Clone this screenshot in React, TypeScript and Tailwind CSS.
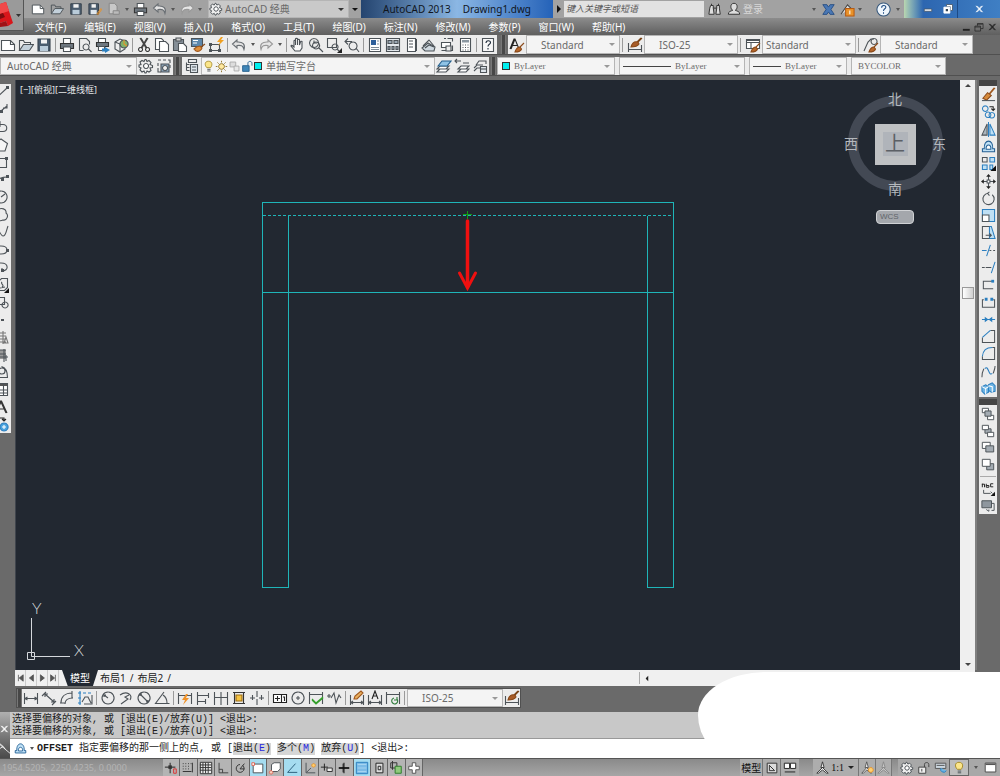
import type { ReactNode } from "react";
import clsx from "clsx";

// ── Icon data: [path, stroke, fill] on a 16 x 16 grid
type Layer = [d: string, stroke?: string, fill?: string];

const K = "#4d5358";
const B = "#2b7fc0";
const L = "#bfe0f5";
const O = "#e8922a";
const N = "none";

const brush: Layer[] = [
  ["M15 6l-4 4", "#8a4a1a"],
  ["M6 15c1-3 2-5 5-5l1.500 2c-1 3-3.500 3-6.500 3z", "#8a4a1a", "#b8682c"],
];
const dims: Layer[] = [["M1.500 5v10M14.500 5v10M2 12.500h12M4 11l-2 1.500 2 1.500M12 11l2 1.500-2 1.500"]];

const icons: Record<string, Layer[]> = {
  new: [["M1.500 3.500h9l4 4v6h-13z", K, "#fff"], ["M10.500 3.500v4h4"]],
  open: [["M1.500 13.500v-10h4l1 2h6v2"], ["M1.500 13.500l4-6h10l-4 6z", K, "#c3d0da"]],
  save: [["M2 2h12v12H2z", "#37424d", "#4a5c6e"], ["M5 2.500h6v4H5z", N, "#f2f2f2"], ["M4 9h8v5H4z", N, "#b9cbd9"]],
  saveAs: [["M1 2h11v12H1z", "#37424d", "#4a5c6e"], ["M4 2.500h5v4H4z", N, "#f2f2f2"], ["M3 9h7v5H3z", N, "#dfe6ec"], ["M15 7l-5 7M16 8l-5 7", O]],
  plotFile: [["M2.500 1.500h6l3 3v9h-9z", "#858585", "#c8c8c8"], ["M7 10h7v4H7z", "#858585", "#bbb"]],
  print: [["M4.500 6V1.500h7V6", K, "#fff"], ["M1.500 6.500h13v5h-13z", "#333", "#6f7880"], ["M4.500 10h7v4.500h-7z", K, "#fff"]],
  preview: [["M2.500 13.500v-12h7l3 3v3M2.500 13.500h4", K, N], ["M9 7a3 3 0 1 0 .1 0M11.500 12l3 3"]],
  publish: [["M3.500 5V1.500h7V5", K, "#fff"], ["M1.500 5.500h12v4h-12z", "#333", "#6f7880"], ["M3.500 9.500h6v4h-6z", K, "#fff"], ["M10 10v1.500H7v3h3V16l5-3z", N, B]],
  dwf: [["M2 5l5-3 5 2v8l-5 3-5-3z", K, "#eee"], ["M2 5l5 2v7M7 7l5-3"], ["M11 3a4 4 0 1 0 .1 0", K, "#7fb069"], ["M11 3v4l3 2", O]],
  cut: [["M4 1l6 10M12 1L6 11M5 1l6 10M11 1L5 11", "#444"], ["M4.500 10.500a2 2 0 1 0 .1 0M11.500 10.500a2 2 0 1 0 .1 0", "#333"]],
  copy: [["M1.500 1.500h6l2 2v9h-8z", K, "#fff"], ["M5.500 4.500h6l3 3v7h-9z", K, "#fff"]],
  paste: [["M1.500 2.500h10v11h-10z", K, "#858f98"], ["M4 1h5v3H4z", K, "#ccc"], ["M6.500 6.500h5l3 3v5h-8z", K, "#fff"]],
  match: [["M1.500 1.500h11v8h-11z", K, "#5e88ac"], ["M3 3.500h5M3 6h4", "#fff"], ["M15 7l-4 3", "#8a4a1a"], ["M4 12c2-2 4-3 6-3l2 2c-1 3-4 4-6 3z", "#a0581e", "#e0903c"]],
  blockEdit: [["M2.500 7.500h9v6h-9z"], ["M1 6h3v3H1zM1 12h3v3H1zM10 12h3v3h-3z", N, K], ["M13 0l-4 5h3l-2 4 6-6h-3l2-3z", N, "#f0a020"]],
  undo: [["M6 3L1.500 7 6 11V8.500c4-.5 6 0 7 4 1.500-5-1-8-7-7.500z", "#6a6f74", "#e3e3e3"]],
  redo: [["M10 3l4.500 4-4.500 4V8.500c-4-.5-6 0-7 4C1.500 7.500 4 4.500 10 5z", "#999", "#e6e6e6"]],
  pan: [["M5 14l-4-5c0-1 1-1 3 1V4c0-1 1.500-1 1.500 0v4V2c0-1 2-1 2 0v6-5c0-1 2-1 2 0v5l1-3c0-1 2-1 1.500 0L12 11l-2 3z", K, "#f7f7f7"]],
  zoomRt: [["M6 1.500a4.500 4.500 0 1 0 .1 0M6 3.500V6h3"], ["M8 5a3.500 3.500 0 1 0 .1 0M11 11l4 4", K]],
  zoomWin: [["M1.500 1.500h9v9h-9z"], ["M9 7a3 3 0 1 0 .1 0M11 12l2 2"], ["M16 11v5h-5z", N, "#222"]],
  zoomPrev: [["M9 5a4 4 0 1 0 .1 0M12 11l3 4"], ["M1 4.500h7M4 1.500l-3 3 3 3"]],
  properties: [["M2.500 1.500h11v13h-11z", K, "#fff"], ["M4 3h5v5H4z", N, "#2d5f9a"], ["M10 4h2M10 7h2M4 10.500h8M4 12.500h8", "#7c8a96"]],
  center: [["M1.500 1.500h13v13h-13z", K, "#e3e8ec"], ["M3 3.500h4v3H3zM9 3.500h4v3H9zM3 9.500h2v3H3zM7 9.500h2v3H7zM11 9.500h2v3h-2z", K, "#9aa8b4"]],
  palettes: [["M4.500 1.500h8v13h-8z", K, "#fff"], ["M12 2h2v12h-2z", N, K], ["M6 4h4M6 7h4M6 10h4"]],
  sheetSet: [["M1 11l6-5 7 4-1 4H4z", K, "#cfd8df"], ["M2 9l6-6 5 6M4 11l4-3 5 2"]],
  markup: [["M2.500 5.500h9v5h-9z", K, "#fff"], ["M8.500 1.500h5v3M2.500 13.500h11v-5M5 1.500h2"], ["M7 9h5v5H7z", K, "#eee"]],
  calc: [["M3.500 1.500h10v13h-10z", K, "#fff"], ["M5 3h7v2.500H5z", N, "#8b97a1"], ["M5.500 8h1M8 8h1M10.500 8h1M5.500 10.500h1M8 10.500h1M10.500 10.500h1M5.500 13h1M8 13h1M10.500 13h1"]],
  help: [["M2.500 1.500h11v13h-11z", K, "#f7f7f7"], ["M6 6c0-3 4.500-3 4.500-.5C10.500 7.500 8 7 8 9.500M8 11v1.500", "#1d2a38"]],
  textStyle: [["M1 12L5 2h1L10 12M3 8.500h5M2 12L6 2", "#222"], ...brush],
  dimStyle: [["M1.500 6v9M14.500 8v7M2 12.500h12"], ["M15 1l-4 4M14 1l-4 4", "#7a4518"], ["M4 10c1-4 3-6 7-5l1 2c-2 3-5 3-8 3z", "#8a4a1a", "#a85c28"]],
  tableStyle: [["M1.500 2.500h13v9h-13z", K, "#fff"], ["M1.500 5.500h13M6 5v6M1 3.500h13"], ...brush],
  leaderStyle: [["M1 14l4-9 3-3h3", K], ["M11 1.500a3 3 0 1 0 .1 0", K], ...brush],
  gear: [["M8 1.500l1 2 2-1 2 2-1 2 2.500 1v2l-2.500.5 1 2.500-2 1.500-2-1-1 2H7l-1-2-2 1-2-2 1-2-2-1v-2l2-.5-1-2.500 2-1.500 2 1 1-2z", K, "#eee"], ["M8 5.500a2.500 2.500 0 1 0 .1 0", K, "#fff"]],
  workspace: [["M2 2h3M7 2h3M12 2h2v3M14 7v3M2 5v3M2 10v4h3"], ["M5 6h8v8H5z", K, "#8aa3b8"], ["M9 7.500a2.500 2.500 0 1 0 .1 0", K, "#eee"]],
  layers: [["M4.500 1.500h8v3h-8zM2.500 4.500v8M2.500 6.500h3M2.500 9.500h3M2.500 12.500h3"], ["M6.500 6.500h7v8h-7z", K, "#dfe6ec"], ["M8 9h4M8 12h4"]],
  bulb: [["M8 1.500c5 0 5 5 2.500 8H6c-3-3-3-8 2-8z", "#a58a2a", "#fbe58a"], ["M6.500 11.500h4M6.500 13.500h4"]],
  sun: [["M8 4.500a3.500 3.500 0 1 0 .1 0", "#8a6d20", "#ffe9a0"], ["M8 1v2M8 13v2M1 8h2M13 8h2M3 3l1.500 1.500M11.500 11.500L13 13M3 13l1.500-1.500M11.500 4.500L13 3", "#8a6d20"]],
  vpFreeze: [["M2.500 2.500h7v6h-7z", "#aaa", "#ddd"], ["M7.500 7.500h6v6h-6z", "#aaa", "#e8e8e8"]],
  unlock: [["M2 7h8v7H2z", "#245f8c", "#3f86b8"], ["M8.500 7V4c0-3 5-3 5 0v3", "#245f8c"]],
  layerCur: [["M1 14l3-3h9l-3 3zM1 11l3-3h9l-3 3z", K, "#fff"], ["M2 8l4-5h9l-4 5z", "#245f8c", "#8fc3e6"]],
  layerPrev: [["M4 14l3-3h8l-3 3zM4 11l3-3h8l-3 3z", K, "#fff"], ["M1 3h6M3 1L1 3l2 2M9 5h6"]],
  layerStates: [["M2 13l3-3h6M2 10l3-3h6M4 7l3-4h7v3", K, N], ["M8.500 8.500h6v6h-6z", K, "#dfe6ec"], ["M8 11h6"]],
  line: [["M2 14L14 3"], ["M13 1h3v3h-3z", N, K]],
  xline: [["M2 14L14 4M14 2v4h-4"], ["M7 8h3v3H7z", N, K]],
  pline: [["M4 4l3-2v4zM6 4.500h4c5 0 5 7 0 7H6"]],
  polygon: [["M8 2l6.500 4.500-2.500 7.500H4L1.500 6.500z", K, "#f5f5f5"]],
  rect: [["M1.500 3.500h12v9h-12z"], ["M12 2h3v3h-3z", N, K]],
  arc: [["M2 14c1-6 5-9 12-9"], ["M13 3h3v3h-3zM8 6h3v3H8z", N, K]],
  circle: [["M8 2a6 6 0 1 0 .1 0M8 8l4-3"]],
  cloud: [["M5 3c3-3 9-1 8 3 3 2 1 8-3 7-4 2-8-1-7-4-2-2-1-6 2-6z"]],
  spline: [["M1 3c4-2 6 9 9 9s3-5 5-10"]],
  ellipse: [["M8 4c8 0 8 8 0 8S0 4 8 4z"], ["M13 7h3v3h-3z", N, K]],
  ellipseArc: [["M4 4h4c8 0 8 8 1 8v-3"], ["M8 10h3v3H8z", N, K]],
  insert: [["M5.500 4.500l3-3h6v9l-3 3h-9v-6z"], ["M9 5c-2 2 3 3 0 5M7 11l5-1"], ["M16 11v5h-5z", N, "#111"]],
  block: [["M1.500 3.500h10v7h-10zM12 8a3 3 0 1 0 .1 0"]],
  point: [["M8 7h3v2H8z", N, K]],
  hatch: [["M1 4h12M1 7h12M1 10h12M1 13h12M5 2v12M10 2v13M13 8l-2 6h4z", "#777"]],
  gradient: [["M1 3h12v9H1z", N, "#999"], ["M1 3h12M1 7h12M1 10h14M11 2v13M13 8v6"]],
  region: [["M1.500 13.500h13c0-7-2-10-6-11M6 7a3 3 0 1 0 6 0 3 3 0 1 0-6 0"]],
  table: [["M1.500 2.500h13v12h-13z", K, "#fff"], ["M1 3h13v2H1z", N, "#555"], ["M1 9h13M1 12h13M6 3v11M10.500 3v11"]],
  mtext: [["M2 14L7.500 2h1L14 14M4.500 10h7M3 14L8 3l5 11", "#333"]],
  addSel: [["M4 2h7v3M9 3l2 2 2-2", "#222"], ["M11 7a4 4 0 1 0 .1 0", B, "#4aa3df"], ["M11 9v4M9 11h4", "#fff"]],
  erase: [["M15 1L9 8M14 1L8 8", "#a0581e"], ["M2 12l5-6 4 3-5 5z", "#8a4a1a", "#d68a3a"], ["M1 14.500h14"]],
  copyObj: [["M4.500 2a3 3 0 1 0 .1 0", B], ["M7.500 8.500a3 3 0 1 0 .1 0M11.500 9a3 3 0 1 0 .1 0", B], ["M9 3h4v4M11 5l2 2 2-2", "#222"]],
  mirror: [["M6.500 2v12H1z", K, "#aab4bc"], ["M9.500 2v12H15z", B, L], ["M8 0v16", B]],
  offset: [["M1.500 13.500h13v-3h-2c1-11-10-11-9 0h-2z", "#235f94", L], ["M5.500 11c-1-6 6-6 5 0z", "#235f94", "#fff"]],
  array: [["M1.500 1.500h5v5h-5z", K], ["M9.500 1.500h5v5h-5zM1.500 9.500h5v5h-5zM9.500 9.500h3v5h-3z", B, L], ["M16 10v6h-6z", N, "#111"]],
  move: [["M8 1v14M1 8h14", K], ["M8 0l2.500 3h-5zM8 16l2.500-3h-5zM0 8l3-2.500v5zM16 8l-3-2.500v5z", N, "#222"], ["M6.500 6.500h3v3h-3z", K, "#fff"]],
  rotate: [["M8 2.500a6 6 0 1 0 4 1.500M9 1L7 2.500 9 5"]],
  scale: [["M1.500 1.500h13v13h-13z", B, L], ["M1.500 7.500h7v7h-7z", K, "#fff"]],
  stretch: [["M9 1.500h2l4 13H9z", B, L], ["M9 1.500H1.500v13H9M5 11h6M9 9l2 2-2 2"]],
  trim: [["M1 8h5", B], ["M9 8h2M13 8h2"], ["M10 2L6 14", B]],
  extend: [["M1 8h3M5 8h6"], ["M15 2l-4 12", B]],
  breakPt: [["M13 12.500H2.500v-8H13", K], ["M11 3h3v3h-3z", N, B]],
  breakObj: [["M3 5H1.500v8h13V5H13", K], ["M4 3h3v3H4zM10 3h3v3h-3z", N, B]],
  join: [["M1 8h14", B], ["M4 5l4 3-4 3zM12 5L8 8l4 3z", N, B]],
  chamfer: [["M1.500 9v5.500h13V1.500H10"], ["M1.500 9L10 1.500", B]],
  fillet: [["M1.500 11v3.500h13V1.500H12"], ["M1.500 11C2 5 6 1.500 12 1.500", B]],
  blend: [["M1 14c0-5 1-7 2-9M13 10c1-3 2-5 2-8"], ["M4 5c4-5 4 9 8 5", B]],
  explode: [["M1 6l4-2 3 2v6l-4 2-3-3zM8 4l4-2 3 3v6l-4 1-3-2z", B, "#6db4e3"], ["M1 6l4 2v6M5 8l3-2M8 5l4 1v6", "#fff"]],
  front: [["M1.500 1.500h7v5h-7zM7.500 9.500h7v5h-7z", K, "#fff"], ["M4.500 4.500h7v6h-7z", K, "#a4acb3"]],
  back: [["M4.500 5.500h7v5h-7z", K, "#a4acb3"], ["M1.500 1.500h7v5h-7zM7.500 9.500h7v5h-7z", K, "#fff"]],
  above: [["M1.500 1.500h9v7h-9z", K, "#fff"], ["M5.500 5.500h9v7h-9z", K, "#a4acb3"]],
  under: [["M6.500 6.500h8v7h-8z", K, "#a4acb3"], ["M1.500 1.500h9v8h-9z", K, "#fff"]],
  annoFront: [["M1.500 2v4M1 2.500h3V6M6 2v4h3V4H6M14 2h-3v3.500h3", "#222"], ["M3 9v4h8M11 11l2 2"], ["M16 11v5h-5z", N, "#111"]],
  hatchBack: [["M1 2h11v8H1z", K, "#8f979e"], ["M6 12l3 2M12 5h3v8h-3M9 14v-2"]],
  dLinear: [["M1.500 3v11M14.500 3v11M2 8.500h12M4.500 7L2 8.500 4.500 10M11.500 7L14 8.500 11.500 10"]],
  dAligned: [["M1 6l4-4M11 15l4-4M4 4l9 8M4 7V4h3M13 9v3h-3"]],
  dArc: [["M2 13C2 7 6 3 13 3M6 14c0-4 3-6 8-6M1 13h5M13 1v7"]],
  dOrd: [["M1 3h3M6 3h3M11 3h3M1 8h3M1 13h3M3 1v14", B], ["M5 12l3-5h3l3 6M7 14h8V5"]],
  dRadius: [["M8 2a6 6 0 1 0 .1 0M8 8L4 5M4 7V5h2"]],
  dJog: [["M2 5c7-5 13 0 10 5M11 5L7 7l3 2-7 5"]],
  dDia: [["M8 2a6 6 0 1 0 .1 0M4 4l8 8M4 6V4h2M12 10v2h-2"]],
  dAng: [["M10 2L1.500 13.500h14M9 5c3 2 4 5 4 8"]],
  quick: [["M1.500 3v11M14.500 3v11M2 5.500h12"], ["M9 4l-4 6h3l-2 5 6-7H9l2-4z", N, "#f0932a"]],
  dBase: [["M2.500 2v13M3 5.500h11M3 11.500h7M13.500 3v5M10.500 9v5"]],
  dCont: [["M1.500 2v13M8 2v13M14.500 2v13M2 7.500h12"]],
  dSpace: [["M2 2.500h12M2 13.500h12M3.500 2v12M12.500 2v12", "#333"], ["M5 5h6v6H5z", "#9a6a10", "#f5c342"]],
  dBreak: [["M1 8h5M10 8h5M8 1v6M8 9v6M3.500 5v5M12.500 5v5"]],
  tol: [["M1.500 4.500h13v8h-13zM9.500 4v9", "#222", "#fff"], ["M3 8.500h5M5.500 6v5M11 7h1.500v4", "#222"]],
  cmark: [["M8 2a6 6 0 1 0 .1 0M8 6v4M6 8h4"]],
  inspect: [["M1.500 2v12M14.500 2v12M2 4.500h12"], ["M4 9l4 4 7-6M4 10l4 4 7-6", "#35a02c"]],
  jogLin: [["M1 6h4M3 4v4M5 8l3-5 2 10 3-8 2 3"]],
  dEdit: [...dims, ["M5 9l1-3 6-5 2 2-6 6z", "#a0581e", "#e8b060"]],
  dText: [...dims, ["M5 9l3-8 3 8M6 6h4", "#222"]],
  dUpd: [["M1.500 2v12M14.500 2v12M2 4.500h12"], ["M9 8a3 3 0 1 0 3 1M12 7v3H9", "#2d7a3a"]],
  infer: [["M7 2v12M1 7h12", "#222"], ["M5 5h4v4H5z", N, "#333"], ["M11 9h3v5h-3z", "#d33"]],
  snap: [["M2 3h1M5 3h1M8 3h1M11 3h1M2 6h1M5 6h1M8 6h1M2 9h1M5 9h1M8 9h1M2 12h10M13 2v11", "#333"]],
  grid: [["M1.500 1.500h13v13h-13zM4.500 2v12M7.500 2v12M10.500 2v12M1 4.500h13M1 7.500h13M1 10.500h13", "#333", "#eee"]],
  ortho: [["M3.500 2v11.500H14M3.500 9.500h4v4", "#444"]],
  polar: [["M8 4a4.500 4.500 0 1 0 3 1M8 9l5-6M8 9h5", "#333"]],
  osnap: [["M2.500 3.500h11v10h-11z", K, "#fff"], ["M1 2h3v3H1z", "#d65", "#fff"]],
  osnap3d: [["M4 4l3-2h7v7l-3 3H4z", K, "#fff"], ["M3.500 11a2 2 0 1 0 .1 0", "#d65", "#f6d0c0"]],
  otrack: [["M3 13L12 3M3 13h11", "#2b5f7c"]],
  ducs: [["M3.500 2v11.500H14M4 13l5-5"], ["M12 3a2 2 0 1 0 .1 0", O, "#ffd070"]],
  dyn: [["M5 3v8M1 7h8", "#222"], ["M8 8h6v4H8z", "#333", "#eee"]],
  lwt: [["M8 2v12M7 3v10", "#111"], ["M2 7h12v2H2z", N, "#111"]],
  tpy: [["M1.500 1.500h13v13h-13z", "#2b7fc0", "#7bbbe6"], ["M3 4h10M3 8h10M3 12h10", "#a8d4f0"]],
  qp: [["M4.500 2.500h8v11h-8z", "#222", "#ddd"], ["M7 6h3v4H7z", "#222"]],
  cycle: [["M2 2h7v6H2zM4 0v10", "#333"], ["M7 6h7v8H7z", "#2f7d2c", "#8fca7c"]],
  plus: [["M6 2h4v4h4v4h-4v4H6v-4H2V6h4z", "#555", "#fff"]],
  sheet: [["M2.500 2.500h11v11h-11z", "#333", "#ddd"], ["M5 5v6h6zM5 5l5 5", "#333"]],
  quickView: [["M1.500 2.500h6v6h-6zM8.500 2.500h6v6h-6z", "#222", "#fff"], ["M2 12.500h12", "#222"]],
  anno: [["M8 8l-7 7h2l5-4 5 4h2zM6 8l2-7 2 7z", "#333", "#eee"]],
  annoVis: [["M7 8l-6 7h2l4-4 5 4h1zM5 8l2-7 2 7z", "#555", "#eee"], ["M12 8a3 3 0 1 0 .1 0", O, "#ffd070"]],
  annoAdd: [["M8 8l-7 7h2l5-4 5 4h2zM6 8l2-7 2 7z", "#888", "#c8c8c8"]],
  lockUi: [["M2 7h8v7H2z", "#444", "#eee"], ["M8.500 7V4c0-3 5-3 5 0v3M5.500 9v3", "#444"]],
  hardware: [["M1.500 2.500h12v6h-12zM3 5h9", "#555", "#ccd6de"], ["M8 8a3 3 0 1 0 6 3", B, "#6db4e3"]],
  clean: [["M1.500 2.500h13v11h-13z", "#444", "#fff"], ["M2 3h12v2H2z", N, "#555"]],
  find: [["M3 4h3v3l1 7H1l1-7zM10 4h3v3l1 7H9l1-7zM6 7h4M4 4V2M12 4V2", "#333", "#ddd"]],
  user: [["M8 1.500c5 0 4 7 1.500 8 2 1 5 1 5 4.500h-13c0-3.500 3-3.500 5-4.500C4 8.500 3 1.500 8 1.500z", "#333", "#ddd"]],
  exchange: [["M1 2h5l2 3 2-3h5l-4 6 4 6h-5l-2-3-2 3H1l4-6z", "#274d82", "#4a78b5"]],
  a360: [["M1 13L8 3l4 4", "#444", "#ddd"], ["M6 7h9v8H6z", "#b85a10", O], ["M10.500 9v4", "#fff"]],
  question: [["M8 1a7 7 0 1 0 .1 0", "#35577c", "#eef5fb"], ["M6 6c0-3 4.500-3 4.500-.5C10.500 7.500 8 7 8 9.500M8 11v1.500", "#1d4a80"]],
  winMin: [["M3 8h10v3H3z", "#456", "#fff"]],
  winMax: [["M6 2h8v8h-3V5H6z", "#456", "#fff"], ["M2.500 5.500h8v8h-8z", "#fff", "#fff"], ["M5 8h3v3H5z", N, "#345"]],
  winClose: [["M3 3l9 10M12 3L3 13M4 3l9 10M13 3L4 13M5 3l9 10M14 3L5 13", "#fff"]],
  docMin: [["M3 11h11v3H3z", N, "#222"]],
  docMax: [["M5.500 6V2.500h9v8H11M5 3.500h9", "#222"], ["M1.500 6.500h9v8h-9zM1 8h9", "#222"]],
  docClose: [["M3 3l9 10M12 3L3 13M4 3l9 10M13 3L4 13M5 3l9 10M14 3L5 13", "#222"]],
  pen: [["M1 1l6 5 3 4 6 5M7 6L2 9M1 2l9 8", "#fff"]],
};

const Icon = ({ name, size = 16 }: { name: string; size?: number }) => (
  <svg width={size} height={size} viewBox="0 0 16 16" className="shrink-0" aria-hidden="true">
    {icons[name].map(([d, stroke = K, fill = N], i) => (
      <path key={i} d={d} stroke={stroke} fill={fill} strokeWidth="1.1" />
    ))}
  </svg>
);

const Tool = ({ name, size, className = "w-[18px]" }: { name: string; size?: number; className?: string }) => (
  <button type="button" aria-label={name} className={clsx("flex shrink-0 items-center justify-center self-stretch", className)}>
    <Icon name={name} size={size} />
  </button>
);

const Caret = ({ className = "text-[#888]" }: { className?: string }) => (
  <svg width="6" height="3" viewBox="0 0 6 3" className={clsx("shrink-0", className)} aria-hidden="true">
    <path d="M0 0h6L3 3z" fill="currentColor" />
  </svg>
);

const Drop = ({ className = "w-[9px]" }: { className?: string }) => (
  <button type="button" aria-label="more" className={clsx("flex h-full shrink-0 items-center justify-center", className)}>
    <svg width="4" height="3" viewBox="0 0 4 3" aria-hidden="true">
      <path d="M0 0h4L2 3z" fill="#555" />
    </svg>
  </button>
);

const Sep = () => <span className="mx-0.5 h-3.5 w-px shrink-0 bg-[#9a9a9a]" />;
const Grip = () => <span className="h-full w-[5px] shrink-0 border-x border-[#777] bg-[#474747]" />;

// Row of tools, "|" is a separator and "." a small drop-down
const Tools = ({ names }: { names: string }) => (
  <>
    {names.split(" ").map((n, i) => (n === "|" ? <Sep key={i} /> : n === "." ? <Drop key={i} /> : <Tool key={i} name={n} />))}
  </>
);

interface ComboProps {
  label: string;
  value: string;
  className: string;
  pad?: string;
  children?: ReactNode;
  dark?: boolean;
}

const Combo = ({ label, value, className, pad = "pl-3.5", children, dark }: ComboProps) => (
  <div className={clsx("flex h-full shrink-0 items-center border border-[#b5b5b5] pr-1", dark ? "bg-[#c9c9c9]" : "bg-[#f4f4f4]", className)}>
    {children}
    <select aria-label={label} className={clsx("h-full min-w-0 flex-1 appearance-none bg-transparent text-[#6a6a6a] outline-none", pad)}>
      <option>{value}</option>
    </select>
    <Caret className={dark ? "text-[#333]" : "text-[#999]"} />
  </div>
);

const Bar = ({ className, children }: { className?: string; children: ReactNode }) => (
  <div className={clsx("flex h-full shrink-0 items-center bg-[#ececec]", className)}>{children}</div>
);

// ── Data
const menus = ["文件(F)", "编辑(E)", "视图(V)", "插入(I)", "格式(O)", "工具(T)", "绘图(D)", "标注(N)", "修改(M)", "参数(P)", "窗口(W)", "帮助(H)"];
const drawTools = "line xline pline polygon rect arc circle cloud spline ellipse ellipseArc insert block point hatch gradient region table mtext addSel".split(" ");
const modifyTools = "erase copyObj mirror offset array move rotate scale stretch trim extend breakPt breakObj join chamfer fillet blend explode".split(" ");
const modes = "infer snap grid ortho polar osnap osnap3d otrack ducs dyn lwt tpy qp cycle plus".split(" ");
const activeModes = ["osnap", "otrack", "tpy"];

function Header() {
  return (
    <header className="flex h-[35px] shrink-0 bg-gradient-to-b from-[#a3a3a3] to-[#606060]">
      <button type="button" aria-label="Application menu" className="flex h-[31px] w-6 shrink-0 items-center border-r border-b border-[#555] bg-[#9a9a9a]">
        <svg width="23" height="30" viewBox="0 0 23 30" aria-hidden="true">
          <path d="M0 4l6-2 7 21-5 3-2-5-6 2z" fill="#d8161b" />
          <path d="M0 4l6-2 3 9-9 3z" fill="#f0494a" />
          <path d="M0 14l3-1 2 4-5 2z" fill="#7c0d10" />
          <path d="M0 23l6-2 2 5-8 1z" fill="#a01216" />
          <path d="M16 14h5l-2.500 3z" fill="#333" />
        </svg>
      </button>
      <div className="min-w-0 flex-1">
        {/* Quick access bar */}
        <div className="flex h-[18px] items-center bg-[#a2a2a2] pl-1">
          {["new", "open", "save", "saveAs", "plotFile"].map((n) => (
            <Tool key={n} name={n} size={14} className="w-[19px]" />
          ))}
          <Drop className="w-2" />
          <Tool name="print" size={15} className="w-[19px]" />
          <Tool name="undo" className="w-[19px]" />
          <Drop className="w-2" />
          <Tool name="redo" className="w-[19px]" />
          <Drop className="mr-1 w-2" />
          <Combo label="快速访问工作空间" value="AutoCAD 经典" className="w-[141px]" pad="pl-0.5" dark>
            <Icon name="gear" size={14} />
          </Combo>
          <button type="button" aria-label="Customize" className="flex w-3 justify-center">
            <Caret className="text-[#111]" />
          </button>
          <h1 className="flex h-full w-[192px] shrink-0 items-center justify-center gap-3 bg-gradient-to-r from-[#24446f] via-[#8bb7e4] to-[#2462b8] text-[#10151c]">
            <span>AutoCAD 2013</span>
            <span>Drawing1.dwg</span>
          </h1>
          <svg width="11" height="8" viewBox="0 0 11 8" className="shrink-0" aria-hidden="true">
            <path d="M4 0v8l4-4z" fill="#111" />
          </svg>
          <input
            aria-label="搜索"
            placeholder="键入关键字或短语"
            className="h-4 w-[140px] shrink-0 bg-[#e2e2e2] px-0.5 text-[9px] italic outline-none placeholder:text-[#555]"
          />
          <Tool name="find" size={14} className="w-[21px]" />
          <Tool name="user" size={14} />
          <button type="button" className="text-[#d8d8d8]">登录</button>
          <span className="ml-auto flex h-full shrink-0 items-center">
            <Drop />
            <Tool name="exchange" size={13} className="w-5" />
            <Tool name="a360" size={15} />
            <Drop className="w-2" />
            <Tool name="question" size={15} className="ml-2.5 w-[19px]" />
            <Drop />
          </span>
          <div className="ml-0.5 flex h-full w-[96px] shrink-0 items-center bg-gradient-to-r from-[#b9d6b0] via-[#2d66b0] via-20% to-[#3f7fc4] pl-[14px]">
            <Tool name="winMin" size={12} className="w-5" />
            <Tool name="winMax" size={12} className="w-5 border-r border-[#1d4a85]" />
            <Tool name="winClose" size={10} className="w-[42px]" />
          </div>
        </div>
        {/* Menu bar */}
        <nav className="flex h-[17px] items-center bg-gradient-to-b from-[#8c8c8c] to-[#5f5f5f]">
          <ul className="flex pl-[11px]">
            {menus.map((m) => (
              <li key={m} className="mr-[18px]">
                <button type="button" className="block leading-4 text-white">{m}</button>
              </li>
            ))}
          </ul>
          <div className="ml-auto flex pr-0.5">
            <Tool name="docMin" size={10} className="w-[13px]" />
            <Tool name="docMax" size={10} className="w-[13px]" />
            <Tool name="docClose" size={10} className="w-[13px]" />
          </div>
        </nav>
      </div>
    </header>
  );
}

function Toolbars() {
  return (
    <div className="flex shrink-0 flex-col gap-0.5 overflow-hidden pb-1">
      <div className="flex h-5 items-center border-b border-[#505050]">
        <Bar className="-ml-px">
          <Tools names="new open save | print preview publish dwf | cut copy paste match blockEdit | undo . redo . | pan zoomRt zoomWin zoomPrev | properties center palettes sheetSet markup calc | help" />
        </Bar>
        <span className="w-1" />
        <Grip />
        <Bar className="ml-0.5">
          <Tool name="textStyle" />
          <Combo label="文字样式" value="Standard" className="w-[94px]" />
          <Sep />
          <Tool name="dimStyle" className="w-[19px]" />
          <Combo label="标注样式" value="ISO-25" className="w-[94px]" />
          <Sep />
          <Tool name="tableStyle" className="w-[19px]" />
          <Combo label="表格样式" value="Standard" className="w-[94px]" pad="pl-[3px]" />
          <Sep />
          <Tool name="leaderStyle" className="w-[19px]" />
          <Combo label="多重引线样式" value="Standard" className="w-[93px]" />
        </Bar>
      </div>
      <div className="flex h-[19px] items-center border-b border-[#505050]">
        <Bar>
          <Combo label="工作空间" value="AutoCAD 经典" className="w-[137px]" pad="pl-1.5" />
          <Tool name="gear" />
          <Tool name="workspace" />
        </Bar>
        <span className="w-0.5" />
        <Grip />
        <Bar className="ml-0.5">
          <Tool name="layers" className="w-[19px]" />
          <Combo label="图层" value="单抽写字台" className="w-[234px]" pad="pl-1">
            <Icon name="bulb" size={13} />
            <Icon name="sun" size={13} />
            <Icon name="vpFreeze" size={13} />
            <Icon name="unlock" size={13} />
            <span className="size-2 shrink-0 border border-[#333] bg-[#00f0f0]" />
          </Combo>
          <Tools names="layerCur layerPrev layerStates" />
        </Bar>
        <span className="w-0.5" />
        <Grip />
        <Bar className="ml-px gap-1 font-['Liberation_Serif','Noto_Sans_CJK_SC',serif] text-[9px]">
          <Combo label="颜色" value="ByLayer" className="w-[118px] pl-1" pad="pl-1">
            <span className="size-2 shrink-0 border border-[#333] bg-[#00f0f0]" />
          </Combo>
          <Combo label="线型" value="ByLayer" className="w-[126px] pl-[3px]" pad="pl-1">
            <span className="h-px w-12 shrink-0 bg-[#444]" />
          </Combo>
          <Combo label="线宽" value="ByLayer" className="w-[98px] pl-[3px]" pad="pl-1">
            <span className="h-px w-7 shrink-0 bg-[#444]" />
          </Combo>
          <Combo label="打印样式" value="BYCOLOR" className="w-[95px]" pad="pl-1.5" />
        </Bar>
      </div>
    </div>
  );
}

function ViewCube() {
  return (
    <div className="absolute top-[11px] right-[13px] flex w-[104px] flex-col items-center gap-3">
      <div className="relative grid h-[106px] w-full grid-cols-[16px_1fr_16px] grid-rows-[16px_1fr_16px] place-items-center text-[14px] leading-4 text-[#b4b8bd]">
        <span className="absolute top-[5px] left-[5px] size-[95px] rounded-full border-[10px] border-[#434954]" />
        <span className="relative col-start-2">北</span>
        <span className="relative col-start-1 row-start-2">西</span>
        <button type="button" className="relative col-start-2 row-start-2 size-[41px] bg-[#bfc1c3] p-2">
          <span className="block bg-[#b0b4ba] text-[20px] leading-6 text-[#5c6066]">上</span>
        </button>
        <span className="relative col-start-3 row-start-2">东</span>
        <span className="relative col-start-2 row-start-3">南</span>
      </div>
      <button type="button" className="mt-px flex h-[14px] w-[38px] items-center rounded-sm border border-[#d0d2d5] bg-[#a4a7ac] px-[3px] font-['Liberation_Sans',sans-serif] text-[8px] text-[#60646a]">
        WCS
      </button>
    </div>
  );
}

function Canvas() {
  return (
    <main className="relative min-w-0 flex-1 border-l border-[#40454d] bg-[#222831]">
      <svg viewBox="16 80 944 590" className="absolute inset-0 h-full w-full" fill="none">
        {/* Desk elevation */}
        <g stroke="#1fb5b8" shapeRendering="crispEdges">
          <path d="M262.500 587.500V202.500H673.500V587.500H647.500V215.500M262.500 587.500H288.500V215.500M262.500 292H673.500" />
          <path d="M262.500 215.500H673.500" strokeDasharray="3 2" />
        </g>
        <path d="M463 214.500h9M467.500 211v8" stroke="#12a012" />
        <path d="M467.500 221v66" stroke="#f01010" strokeWidth="3.500" strokeLinecap="round" />
        <path d="M459.500 273l8 15 8-15" stroke="#f01010" strokeWidth="3" strokeLinecap="round" />
        {/* UCS axes */}
        <path d="M31.500 618v38.500H70M27.500 652.500h7v7h-7z" stroke="#d5d8dc" />
        <g fill="#d5d8dc" fontFamily="Lato, sans-serif" fontWeight="300" fontSize="16">
          <text x="32" y="614">Y</text>
          <text x="74" y="656">X</text>
        </g>
      </svg>
      <p className="relative px-1 pt-0.5 text-[9px] leading-4 text-[#e4e6e8]">[−][俯视][二维线框]</p>
      <ViewCube />
    </main>
  );
}

function Workspace() {
  return (
    <div className="flex flex-1">
      <aside className="w-[15px] shrink-0 pt-1">
        <div className="flex h-[349px] w-[11px] flex-col overflow-hidden bg-[#ececec]">
          {drawTools.map((n) => (
            <button key={n} type="button" aria-label={n} className="flex w-[9px] flex-1 items-center justify-end">
              <Icon name={n} />
            </button>
          ))}
        </div>
      </aside>
      <Canvas />
      {/* Vertical scrollbar */}
      <div className="flex w-[15px] shrink-0 flex-col items-center justify-between bg-[#efefef] py-1">
        <Caret className="rotate-180 text-[#444]" />
        <span className="mb-[164px] h-3 w-3 border border-[#999] bg-gradient-to-r from-white to-[#cfcfcf]" />
        <Caret className="text-[#444]" />
      </div>
      <aside className="flex w-[25px] shrink-0 flex-col border-l-2 border-[#808080] pl-0.5">
        <span className="h-1.5 w-[18px] bg-[#454545]" />
        <div className="flex h-[311px] w-[18px] flex-col bg-[#ececec]">
          {modifyTools.map((n) => (
            <button key={n} type="button" aria-label={n} className="flex flex-1 items-center justify-center">
              <Icon name={n} size={15} />
            </button>
          ))}
        </div>
        <span className="mt-0.5 h-1.5 w-[18px] bg-[#454545]" />
        <div className="flex w-[18px] flex-col bg-[#ececec]">
          {["front", "back", "above", "under"].map((n) => (
            <Tool key={n} name={n} size={14} className="h-[17px]" />
          ))}
          <span className="mx-px my-[3px] h-px bg-[#aaa]" />
          <Tool name="annoFront" size={14} className="h-[17px]" />
          <Tool name="hatchBack" size={14} className="h-[17px]" />
        </div>
      </aside>
    </div>
  );
}

function LayoutTabs() {
  return (
    <div className="mr-[25px] ml-[15px] flex h-4 items-center bg-[#f0f0f0] text-[#222]">
      {["M3 1v8M9 1v8L4 5z", "M8 1v8L3 5z", "M3 1v8l5-4z", "M2 1v8l5-4zM8 1v8"].map((d) => (
        <button key={d} type="button" aria-label="scroll tabs" className="flex h-full w-[11px] items-center justify-center border-r border-[#ccc]">
          <svg width="8" height="8" viewBox="0 0 10 10" aria-hidden="true">
            <path d={d} fill="#555" stroke="#555" />
          </svg>
        </button>
      ))}
      <button type="button" className="ml-[3px] h-full w-9 bg-[#222831] text-center leading-4 text-white [clip-path:polygon(0_0,100%_0,86%_100%,16%_100%)]">模型</button>
      <button type="button" className="ml-0.5 leading-4">布局1</button>
      <span className="mx-1">/</span>
      <button type="button" className="leading-4">布局2</button>
      <span className="ml-1">/</span>
      <span className="ml-auto flex h-3 w-[336px] items-center border-l border-[#aaa]">
        <Caret className="ml-1 rotate-90 text-[#222]" />
      </span>
    </div>
  );
}

const Option = ({ name, letter }: { name: string; letter: string }) => (
  <button type="button" className="bg-[#d6d6d6]">
    {name}(<span className="text-[#2a2ae0]">{letter}</span>)
  </button>
);

function CommandPanel() {
  return (
    <section className="flex font-['Liberation_Mono','Noto_Sans_CJK_SC',monospace] whitespace-pre text-[#1c1c1c]">
      <div className="flex w-2.5 shrink-0 flex-col justify-between overflow-hidden bg-gradient-to-b from-[#b0b0b0] to-[#4a4a4a] pt-3 pb-1">
        <Tool name="winClose" size={10} className="h-2.5 w-2" />
        <Tool name="pen" size={12} className="h-3 w-2" />
      </div>
      <div className="min-w-0 flex-1">
        <div className="h-[27px] border-b border-[#999] bg-[#c8c8c8] pt-0.5 pl-0.5 leading-3">
          <p>选择要偏移的对象, 或 [退出(E)/放弃(U)] &lt;退出&gt;:</p>
          <p>选择要偏移的对象, 或 [退出(E)/放弃(U)] &lt;退出&gt;:</p>
        </div>
        <div className="flex h-[19px] items-center bg-white pl-1 leading-3">
          <Icon name="offset" size={13} />
          <Drop className="w-[10px]" />
          <p>
            <b>OFFSET</b> 指定要偏移的那一侧上的点, 或 [<Option name="退出" letter="E" /> <Option name="多个" letter="M" /> <Option name="放弃" letter="U" />] &lt;退出&gt;:
          </p>
        </div>
      </div>
    </section>
  );
}

function StatusBar() {
  return (
    <footer className="flex h-[18px] shrink-0 items-center border-t border-[#555] bg-gradient-to-b from-[#8a8a8a] to-[#a6a6a6]">
      <p className="w-[163px] shrink-0 pl-0.5 text-[9px] whitespace-nowrap text-[#b4b4b4]">1954.5205, 2250.4235, 0.0000</p>
      <div className="flex h-full w-[260px] shrink-0">
        {modes.map((n) => (
          <button
            key={n}
            type="button"
            aria-label={n}
            className={clsx("flex flex-1 items-center justify-center border-r border-[#666]", activeModes.includes(n) ? "bg-[#a5dcf0]" : "bg-[#b4b4b4]")}
          >
            <Icon name={n} size={14} />
          </button>
        ))}
      </div>
      <div className="ml-auto flex h-full items-center bg-[#adadad] text-[#111]">
        <button type="button" className="h-full border-r border-[#777] px-px leading-4">模型</button>
        <Tool name="sheet" size={14} className="w-[18px] border-r border-[#777]" />
        <Tool name="quickView" size={14} />
      </div>
      <div className="ml-[14px] flex h-full items-center bg-[#adadad] text-[#111]">
        <Tool name="anno" size={13} />
        <button type="button" className="flex items-center gap-1 font-['Liberation_Serif',serif]">
          1:1 <Caret className="text-[#222]" />
        </button>
        <span className="w-1" />
        <Tool name="annoVis" size={13} className="w-[17px] border-l border-[#777]" />
        <Tool name="annoAdd" size={13} className="w-[17px] border-x border-[#777]" />
      </div>
      <div className="ml-1.5 flex h-full items-center bg-[#a8a8a8] pr-0.5">
        <Tool name="gear" size={14} className="w-[17px]" />
        <Tool name="lockUi" size={14} className="w-[17px]" />
        <Tool name="hardware" size={14} className="w-[17px]" />
        <Tool name="bulb" size={14} className="w-5 border border-[#666] bg-[#bdbdbd]" />
        <Drop className="w-[13px]" />
        <Tool name="clean" size={13} className="w-4" />
      </div>
    </footer>
  );
}

export default function App() {
  return (
    <div className="flex min-h-screen flex-col overflow-hidden bg-[#6a6a6a] font-['Noto_Sans','Noto_Sans_CJK_SC',sans-serif] text-[10px] leading-4">
      <Header />
      <Toolbars />
      <Workspace />
      <div className="relative shrink-0">
        <LayoutTabs />
        {/* Dimension toolbar */}
        <div className="mt-0.5 mb-1 ml-4 flex h-5 w-fit items-center border border-[#505050] bg-[#ececec]">
          <Grip />
          <Tools names="dLinear dAligned dArc dOrd | dRadius dJog dDia dAng | quick dBase dCont dSpace dBreak | tol cmark inspect jogLin | dEdit dText dUpd |" />
          <Combo label="当前标注样式" value="ISO-25" className="w-[96px]" />
          <Tool name="dimStyle" className="w-[17px]" />
        </div>
        <CommandPanel />
        <div className="absolute top-0.5 right-0 bottom-0 w-[302px] rounded-tl-[70px_44px] rounded-bl-[40px_44px] bg-white" />
      </div>
      <StatusBar />
    </div>
  );
}
